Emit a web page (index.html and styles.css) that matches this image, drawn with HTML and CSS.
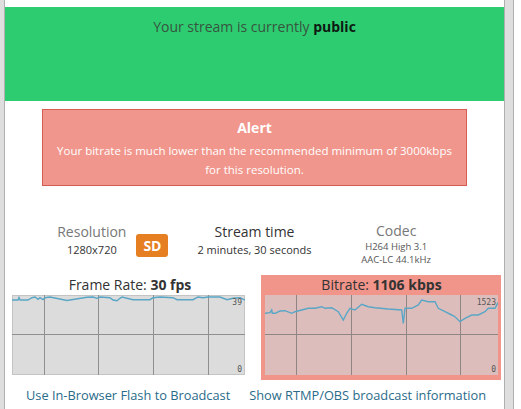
FILE: index.html
```html
<!DOCTYPE html>
<html lang="en">
<head>
    <meta charset="UTF-8">
    <meta name="viewport" content="width=device-width, initial-scale=1.0">
    <title>Stream Status</title>
    <link rel="stylesheet" href="styles.css">
</head>
<body>
    <div class="frame">
        <div class="rail-left"></div>

        <main class="main">
            <div class="status">Your stream is currently <b>public</b></div>

            <div class="alert">
                <div class="alert-title">Alert</div>
                <div class="alert-text">Your bitrate is much lower than the recommended minimum of 3000kbps<br>for this resolution.</div>
            </div>

            <div class="stats">
                <div class="stat stat-res">
                    <div>
                        <div class="stat-label">Resolution</div>
                        <div class="stat-value">1280x720</div>
                    </div>
                    <span class="badge">SD</span>
                </div>
                <div class="stat">
                    <div class="stat-label dark">Stream time</div>
                    <div class="stat-value">2 minutes, 30 seconds</div>
                </div>
                <div class="stat stat-codec">
                    <div class="stat-label">Codec</div>
                    <div class="stat-small">H264 High 3.1<br>AAC-LC 44.1kHz</div>
                </div>
            </div>

            <div class="charts">
                <div class="chart-panel">
                    <div class="chart-title">Frame Rate: <b>30 fps</b></div>
                    <svg class="chart" viewBox="0 0 233 80" width="233" height="80">
                        <rect x="0.5" y="0.5" width="232" height="79" fill="#dcdcdc" stroke="#c4c4c4"/>
                        <g stroke="#8f8f8f" stroke-width="1">
                            <line x1="32.5" y1="0" x2="32.5" y2="80"/>
                            <line x1="86.5" y1="0" x2="86.5" y2="80"/>
                            <line x1="141.5" y1="0" x2="141.5" y2="80"/>
                            <line x1="196.5" y1="0" x2="196.5" y2="80"/>
                            <line x1="0" y1="39.5" x2="233" y2="39.5"/>
                        </g>
                        <polyline fill="none" stroke="#5aa6c6" stroke-width="1.4" points="0,5 6,5 7,2.5 8,5 16,5 20,2.7 23,2 26,4.3 28,2.7 31,4.7 33,2.7 38,2 55,5.5 75,2.3 81,2 85,3.3 88,2 98,2.7 101,5 105,5.7 108,3.3 110,2 121,4.7 138,4.7 141,2.7 148,2 161,2.7 165,4.7 181,4.7 186,2 191,2.7 196,2 208,2 215,4.7 221,3.3 228,2.7 233,5"/>
                        <text class="axis" x="230" y="10" text-anchor="end">39</text>
                        <text class="axis" x="230" y="77" text-anchor="end">0</text>
                    </svg>
                </div>
                <div class="chart-panel warn">
                    <div class="chart-title">Bitrate: <b>1106 kbps</b></div>
                    <svg class="chart" viewBox="0 0 233 80" width="233" height="80">
                        <rect x="0" y="0" width="233" height="80" fill="#dcbdbb"/>
                        <g stroke="#8f8585" stroke-width="1">
                            <line x1="31.5" y1="0" x2="31.5" y2="80"/>
                            <line x1="86.5" y1="0" x2="86.5" y2="80"/>
                            <line x1="141.5" y1="0" x2="141.5" y2="80"/>
                            <line x1="195.5" y1="0" x2="195.5" y2="80"/>
                            <line x1="0" y1="39.5" x2="233" y2="39.5"/>
                        </g>
                        <polyline fill="none" stroke="#5aa6c6" stroke-width="1.4" points="0,18.3 5,17.7 6.7,15 7.3,18.3 10,18.3 15,16 20,15.7 26.7,18.3 30,16.7 36.7,15 43.3,13.3 50,13.3 56.7,11.7 60,13.3 66.7,12.7 73.3,16.7 78.3,25 81.7,18.3 85,13.3 90,15 96.7,9.3 103.3,11.7 110,12.7 123.3,14 136.7,15 138.3,28.3 140,13.3 146.7,13.3 153.3,10 156.7,5 163.3,6.7 170,6.7 173.3,13.3 180,16.7 186.7,20 190,21.7 195,26.7 200,23.3 206.7,20 213.3,20 220,16.7 223.3,13.3 230,13.3 233,7.7"/>
                        <text class="axis" x="231" y="10" text-anchor="end">1523</text>
                        <text class="axis" x="231" y="77" text-anchor="end">0</text>
                    </svg>
                </div>
            </div>

            <div class="links">
                <a href="#">Use In-Browser Flash to Broadcast</a>
                <a href="#">Show RTMP/OBS broadcast information</a>
            </div>
        </main>

        <div class="rail-right"></div>
    </div>
</body>
</html>
```

FILE: styles.css
```css
body {
    margin: 0;
    padding: 0;
    background: #ffffff;
    font-family: "Open Sans", Arial, sans-serif;
    color: #333;
}

.frame {
    display: flex;
    height: 100vh;
    overflow: hidden;
}

.rail-left {
    width: 4px;
    background: #dedede;
    border-right: 1px solid #b0b0b0;
}

.rail-right {
    width: 8px;
    background: #dedede;
    border-left: 1px solid #b0b0b0;
    border-right: 1px solid #b0b0b0;
}

.main {
    width: 499px;
    padding-top: 7px;
    background: #fff;
}

.status {
    height: 94px;
    background: #2ecc71;
    box-sizing: border-box;
    padding-top: 10px;
    text-align: center;
    font-size: 14px;
    color: #37543f;
}

.status b {
    color: #0d1a12;
    font-weight: 700;
}

.alert {
    margin: 8px 37px 0;
    height: 77px;
    box-sizing: border-box;
    background: #f1968c;
    border: 1px solid #d35d52;
    color: #fff;
    text-align: center;
    padding-top: 8px;
}

.alert-title {
    font-size: 14px;
    font-weight: 700;
    line-height: 20px;
}

.alert-text {
    font-size: 11.5px;
    line-height: 19px;
    margin-top: 3px;
}

.stats {
    display: grid;
    grid-template-columns: 1fr 1fr 1fr;
    margin: 36px 37px 0;
    text-align: center;
}

.stat-res {
    display: flex;
    justify-content: center;
    align-items: flex-start;
    gap: 10px;
}

.stat-label {
    font-size: 14px;
    line-height: 20px;
    color: #777;
}

.stat-label.dark {
    color: #333;
}

.stat-codec {
    margin-top: -1px;
}

.stat-codec .stat-label {
    line-height: 19px;
}

.stat-value {
    font-size: 11px;
    line-height: 16px;
    color: #333;
}

.stat-small {
    font-size: 9.5px;
    line-height: 13px;
    color: #555;
}

.badge {
    margin-top: 12px;
    width: 32px;
    height: 23px;
    line-height: 23px;
    border-radius: 3px;
    background: #e67e22;
    color: #fff;
    font-weight: 700;
    font-size: 14px;
}

.charts {
    display: grid;
    grid-template-columns: 243px 240px;
    gap: 10px;
    margin: 9px 0 0 3px;
}

.chart-panel {
    padding: 0 3px 5px 4px;
    text-align: center;
}

.chart-panel.warn {
    background: #f1958b;
}

.chart-title {
    font-size: 14px;
    line-height: 20px;
    color: #333;
}

.chart {
    display: block;
}

.axis {
    font-family: "DejaVu Sans Mono", monospace;
    font-size: 8px;
    fill: #555;
}

.links {
    display: flex;
    justify-content: space-between;
    margin: 6px 18px 0 21px;
}

.links a {
    font-size: 12.8px;
    color: #2a6b8a;
    text-decoration: none;
}
```
